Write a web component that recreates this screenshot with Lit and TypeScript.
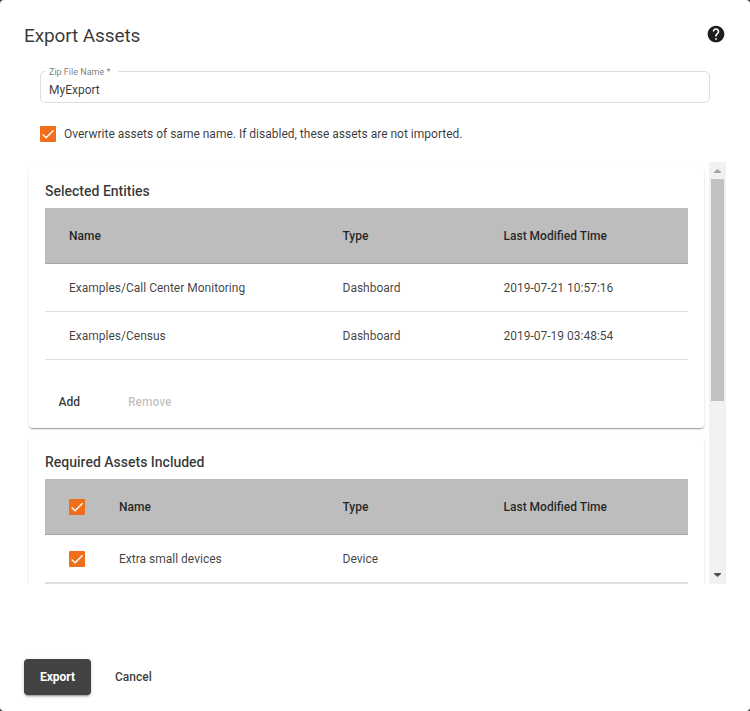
import { LitElement, html, css } from "lit";
import { customElement, property } from "lit/decorators.js";

interface Asset {
  name: string;
  type: string;
  modified: string;
}

@customElement("check-box")
class CheckBox extends LitElement {
  static styles = css`
    :host { display: block; width: 16px; height: 16px; border-radius: 1px; background: #ef6f1a; flex: none; }
    svg { display: block; width: 16px; height: 16px; }
    path { fill: none; stroke: #fff; stroke-width: 1.42; }
  `;
  render() {
    return html`<svg viewBox="0 0 16 16"><path d="M2.7 8.5 6.1 11.7 13.6 4.2" /></svg>`;
  }
}

@customElement("asset-table")
class AssetTable extends LitElement {
  @property({ attribute: false }) rows: Asset[] = [];
  @property({ type: Boolean }) selectable = false;

  static styles = css`
    :host { display: block; color: rgba(0, 0, 0, 0.76); font-size: 12px; }
    .row {
      display: grid;
      grid-template-columns: 273.5px 161px 1fr;
      align-items: center;
      box-sizing: border-box;
      height: 48px;
      padding-left: 24px;
      border-bottom: 1px solid #dfdfdf;
    }
    .head { height: 56px; background: #bdbdbd; font-weight: 500; border-bottom-color: #a6a6a6; color: rgba(0, 0, 0, 0.82); }
    .name { display: flex; align-items: center; gap: 34px; }
  `;

  private line(cls: string, a: Asset) {
    return html`<div class="row ${cls}">
      <div class="name">${this.selectable ? html`<check-box></check-box>` : ""}<span>${a.name}</span></div>
      <span>${a.type}</span>
      <span>${a.modified}</span>
    </div>`;
  }
  render() {
    return html`${this.line("head", { name: "Name", type: "Type", modified: "Last Modified Time" })}
    ${this.rows.map((r) => this.line("", r))}`;
  }
}

@customElement("app-root")
class AppRoot extends LitElement {
  private selected: Asset[] = [
    { name: "Examples/Call Center Monitoring", type: "Dashboard", modified: "2019-07-21 10:57:16" },
    { name: "Examples/Census", type: "Dashboard", modified: "2019-07-19 03:48:54" },
  ];
  private required: Asset[] = [{ name: "Extra small devices", type: "Device", modified: "" }];

  static styles = css`
    :host { display: block; height: 711px; background: #333; font: 400 12px/16px Roboto, sans-serif; color: rgba(0, 0, 0, 0.79); }
    .dialog { box-sizing: border-box; height: 711px; padding: 24px 24px 0; background: #fff; border-radius: 4px; display: flex; flex-direction: column; }
    .dialog > * { flex-shrink: 0; }
    header { display: flex; justify-content: space-between; height: 47px; }
    h1 { margin: 0; font: 400 19px/24px Roboto, sans-serif; letter-spacing: -0.11px; }
    .help { width: 20px; height: 20px; fill: #1d1d1d; }
    .field { position: relative; box-sizing: border-box; height: 32px; margin: 0 16px; padding: 10px 8px 0; border: 1px solid #dedede; border-radius: 5px; font-size: 12px; }
    .label { position: absolute; top: -5px; left: 5px; width: 72px; padding-left: 3px; background: #fff; font-size: 9px; line-height: 10px; color: rgba(0, 0, 0, 0.55); box-sizing: border-box; white-space: nowrap; }
    .overwrite { display: flex; align-items: center; gap: 8px; height: 16px; margin: 23px 16px 20px; }
    .scroller { display: flex; height: 422px; }
    .content { flex: 1; height: 422px; padding: 5px; box-sizing: border-box; overflow: hidden; }
    .card { box-sizing: border-box; height: 261px; padding: 16px; border-radius: 4px; background: #fff; margin-bottom: 10px;
      box-shadow: 0 2px 1px -1px rgba(0, 0, 0, 0.2), 0 1px 1px 0 rgba(0, 0, 0, 0.14), 0 1px 3px 0 rgba(0, 0, 0, 0.12); }
    h2 { margin: 0; height: 25px; font: 500 14px/17px Roboto, sans-serif; }
    .rest { border-top: 1px solid #dfdfdf; }
    .actions { display: flex; gap: 48px; padding: 34px 13.5px; font-weight: 500; }
    .off { color: rgba(0, 0, 0, 0.26); }
    .bar { width: 17px; background: #f1f1f1; display: flex; flex-direction: column; align-items: center; }
    .bar svg { width: 17px; height: 17px; }
    .thumb { width: 13px; height: 222px; background: #c1c1c1; }
    .grow { flex: 1; }
    footer { display: flex; align-items: center; gap: 24px; height: 36px; margin-top: 75px; font-weight: 500; }
    .export { width: 67px; height: 36px; border-radius: 4px; background: #424242; color: #fff; line-height: 36px; text-align: center; font-weight: 700;
      box-shadow: 0 3px 1px -2px rgba(0, 0, 0, 0.2), 0 2px 2px 0 rgba(0, 0, 0, 0.14), 0 1px 5px 0 rgba(0, 0, 0, 0.12); }
  `;

  render() {
    return html`<div class="dialog">
      <header>
        <h1>Export Assets</h1>
        <svg class="help" viewBox="0 0 24 24"><path d="M12 2C6.48 2 2 6.48 2 12s4.48 10 10 10 10-4.48 10-10S17.52 2 12 2zm1 17h-2v-2h2v2zm2.07-7.75l-.9.92C13.45 12.9 13 13.5 13 15h-2v-.5c0-1.1.45-2.1 1.17-2.83l1.24-1.26c.37-.36.59-.86.59-1.41 0-1.1-.9-2-2-2s-2 .9-2 2H8c0-2.21 1.79-4 4-4s4 1.79 4 4c0 .88-.36 1.68-.93 2.25z" /></svg>
      </header>
      <div class="field"><span class="label">Zip File Name *</span>MyExport</div>
      <div class="overwrite"><check-box></check-box><span>Overwrite assets of same name. If disabled, these assets are not imported.</span></div>
      <div class="scroller">
        <div class="content">
          <section class="card">
            <h2>Selected Entities</h2>
            <asset-table .rows=${this.selected}></asset-table>
            <div class="actions"><span>Add</span><span class="off">Remove</span></div>
          </section>
          <section class="card">
            <h2>Required Assets Included</h2>
            <asset-table selectable .rows=${this.required}></asset-table>
            <div class="rest"></div>
          </section>
        </div>
        <div class="bar">
          <svg viewBox="0 0 17 17"><path d="M5 11h7v-1L8.5 7 5 10z" fill="#a3a3a3" /></svg>
          <div class="thumb"></div>
          <div class="grow"></div>
          <svg viewBox="0 0 17 17"><path d="M5 6h7v1L8.5 10 5 7z" fill="#505050" /></svg>
        </div>
      </div>
      <footer><div class="export">Export</div><span>Cancel</span></footer>
    </div>`;
  }
}
